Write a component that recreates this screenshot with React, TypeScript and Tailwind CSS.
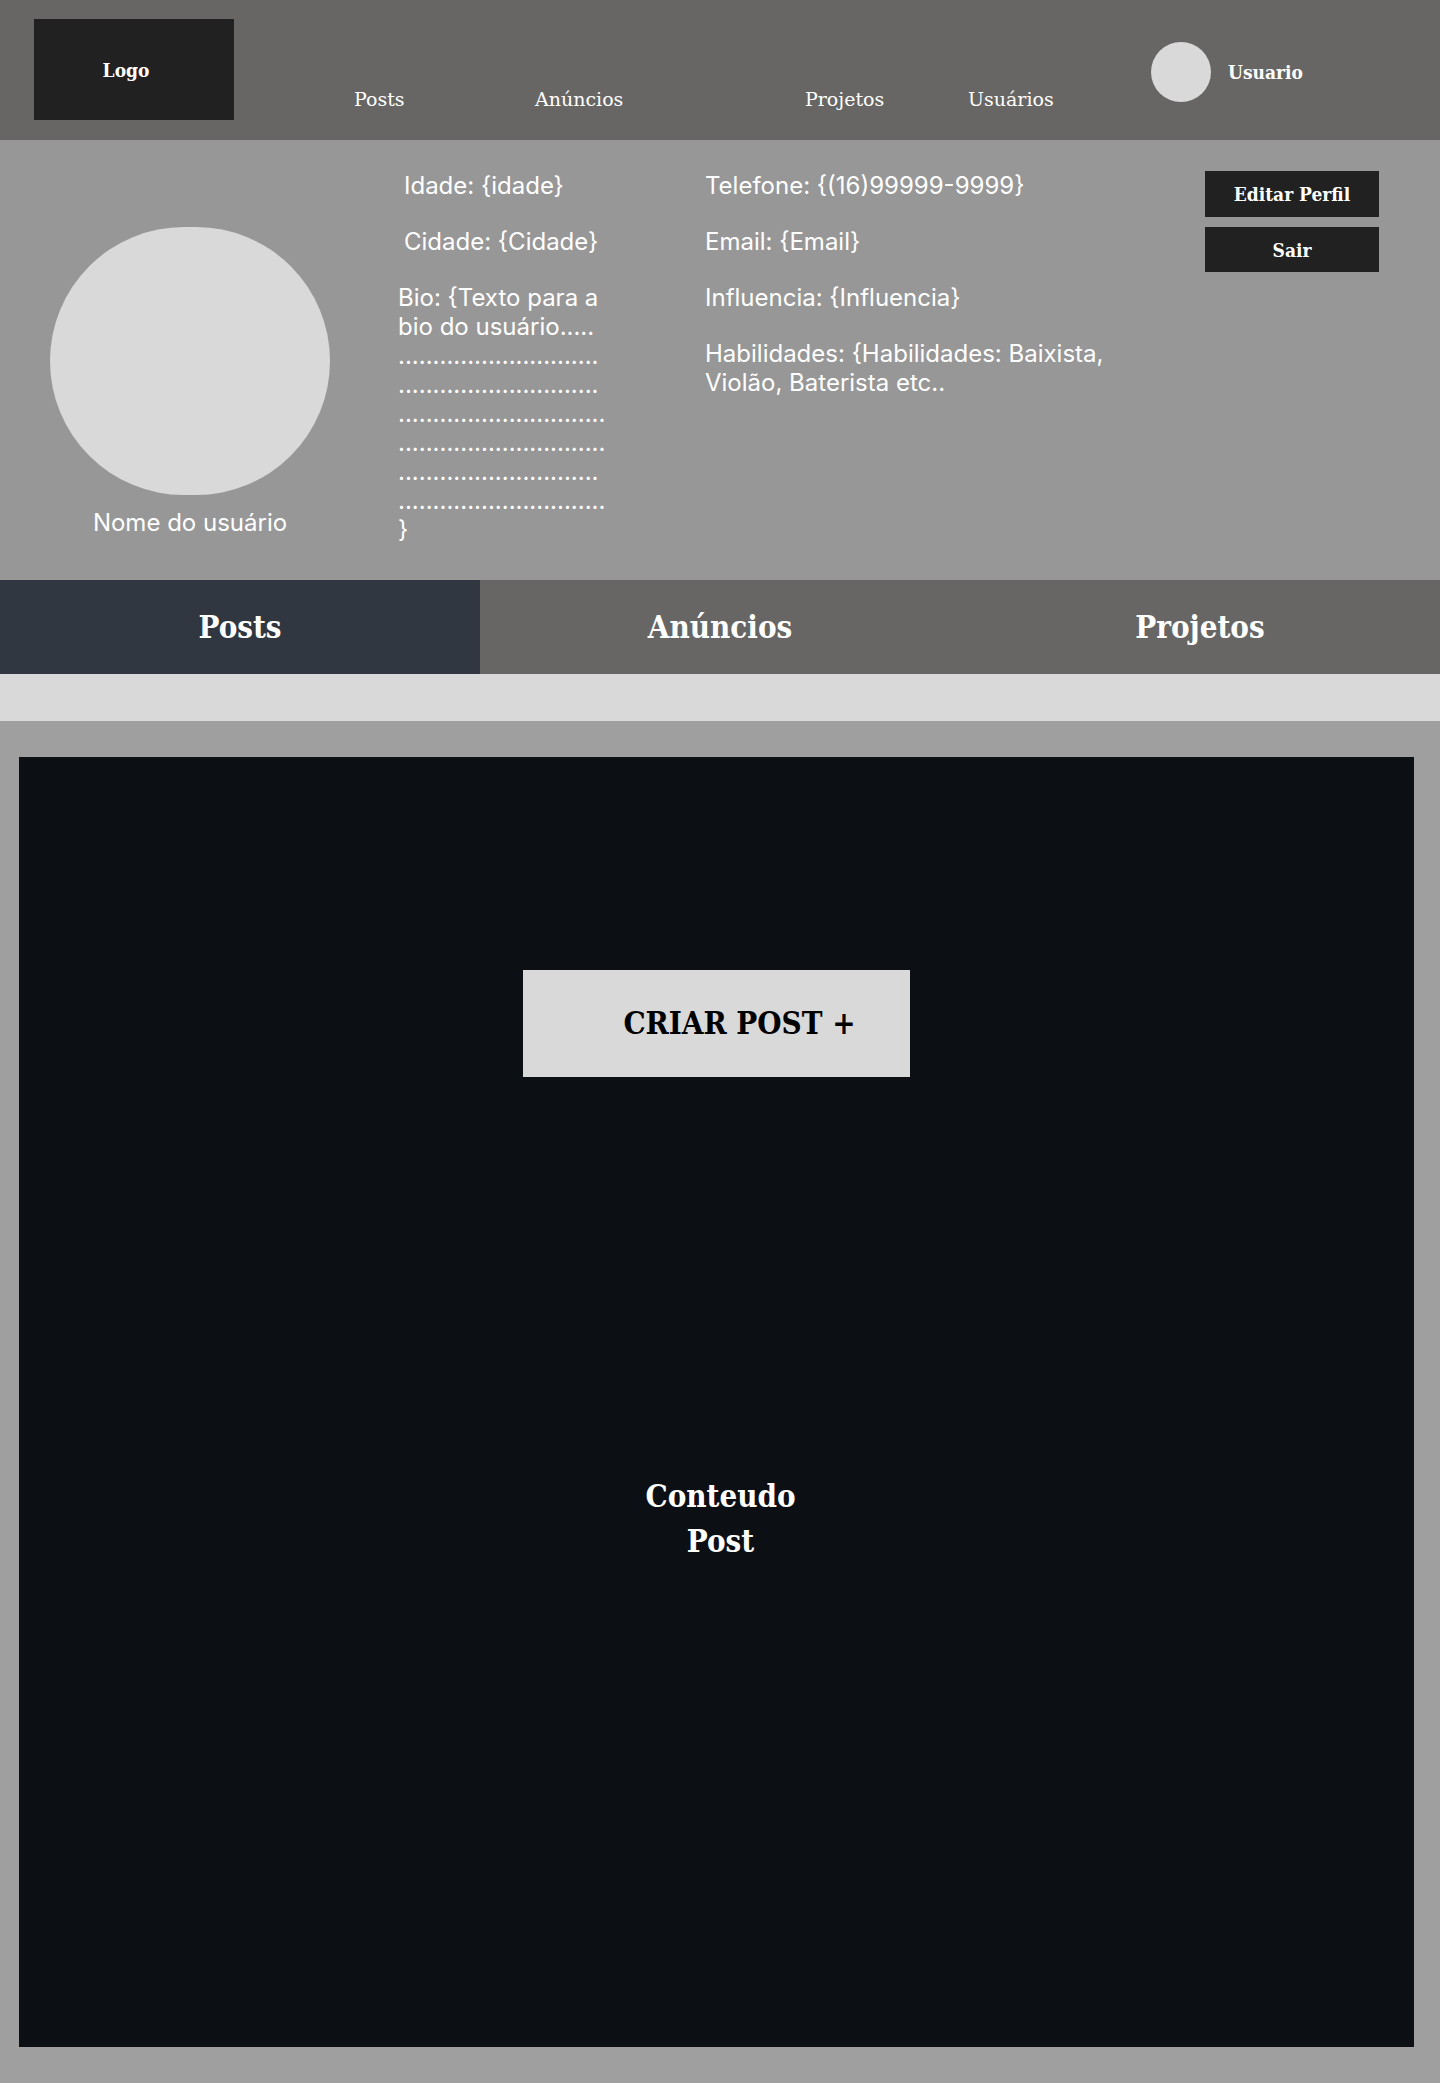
const slab = "font-['Roboto_Slab','DejaVu_Serif_Condensed','DejaVu_Serif',serif]";

const bio = [
  "Bio: {Texto para a",
  "bio do usuário.....",
  ".............................",
  ".............................",
  "..............................",
  "..............................",
  ".............................",
  "..............................",
  "}",
];

function Header() {
  return (
    <header className="flex h-[140px] items-start bg-[#676664] pl-[34px] pt-[19px] text-[19px]/6 text-white">
      <a
        href="#inicio"
        className="flex h-[101px] w-[200px] shrink-0 items-center justify-center bg-[#212121] pr-4 font-bold"
      >
        Logo
      </a>
      <nav className="ml-[120px] mt-[68px] grid flex-1 grid-cols-[181fr_270fr_163fr_183fr] font-['Roboto_Slab','DejaVu_Serif',serif] font-medium">
        <a href="#posts">Posts</a>
        <a href="#anuncios">Anúncios</a>
        <a href="#projetos">Projetos</a>
        <a href="#usuarios">Usuários</a>
      </nav>
      <a href="#perfil" className="mt-[23px] flex w-[289px] shrink-0 items-center gap-[17px] font-bold">
        <span className="size-[60px] rounded-full bg-[#d9d9d9]" />
        Usuario
      </a>
    </header>
  );
}

function Profile() {
  return (
    <section className="flex h-[440px] items-start bg-[#979797] pl-[50px] pr-[61px] pt-[31px] font-['Inter',sans-serif] text-2xl/[29px] text-white">
      <div className="mt-14 flex w-[280px] shrink-0 flex-col items-center gap-[13px]">
        <div className="h-[268px] w-full rounded-full bg-[#d9d9d9]" />
        <p>Nome do usuário</p>
      </div>
      <div className="ml-[68px] flex w-[307px] shrink-0 flex-col gap-[27px]">
        <p className="pl-[6px]">{"Idade: {idade}"}</p>
        <p className="pl-[6px]">{"Cidade: {Cidade}"}</p>
        <p>
          {bio.map((line, i) => (
            <span key={i} className="block whitespace-nowrap">
              {line}
            </span>
          ))}
        </p>
      </div>
      <div className="flex flex-1 flex-col gap-[27px]">
        <p>{"Telefone: {(16)99999-9999}"}</p>
        <p>{"Email: {Email}"}</p>
        <p>{"Influencia: {Influencia}"}</p>
        <p className="max-w-[420px]">{"Habilidades: {Habilidades: Baixista, Violão, Baterista etc.."}</p>
      </div>
      <div className={`${slab} flex w-[174px] shrink-0 flex-col gap-[10px] text-[19px]/6 font-bold`}>
        <button type="button" className="h-[46px] bg-[#212121]">
          Editar Perfil
        </button>
        <button type="button" className="h-[45px] bg-[#212121]">
          Sair
        </button>
      </div>
    </section>
  );
}

function Tabs() {
  return (
    <div role="tablist" className="grid h-[94px] grid-cols-3 bg-[#676664] text-[31px]/[45px] font-bold text-white">
      <button type="button" role="tab" aria-selected="true" className="bg-[#303740]">
        Posts
      </button>
      <button type="button" role="tab" aria-selected="false">
        Anúncios
      </button>
      <button type="button" role="tab" aria-selected="false">
        Projetos
      </button>
    </div>
  );
}

export default function App() {
  return (
    <div className={`${slab} bg-[#9f9f9f]`}>
      <Header />
      <Profile />
      <Tabs />
      <div className="h-[47px] bg-[#d9d9d9]" />
      <main className="pb-9 pl-[19px] pr-[26px] pt-9">
        <section className="flex min-h-[1290px] flex-col items-center bg-[#0c0f13] pt-[213px] text-[31px]/[45px] font-bold">
          <button type="button" className="h-[107px] w-[387px] bg-[#d9d9d9] pl-[46px] text-black">
            CRIAR POST +
          </button>
          <h2 className="mt-[397px] pl-2 text-center text-white">
            Conteudo
            <br />
            Post
          </h2>
        </section>
      </main>
    </div>
  );
}
